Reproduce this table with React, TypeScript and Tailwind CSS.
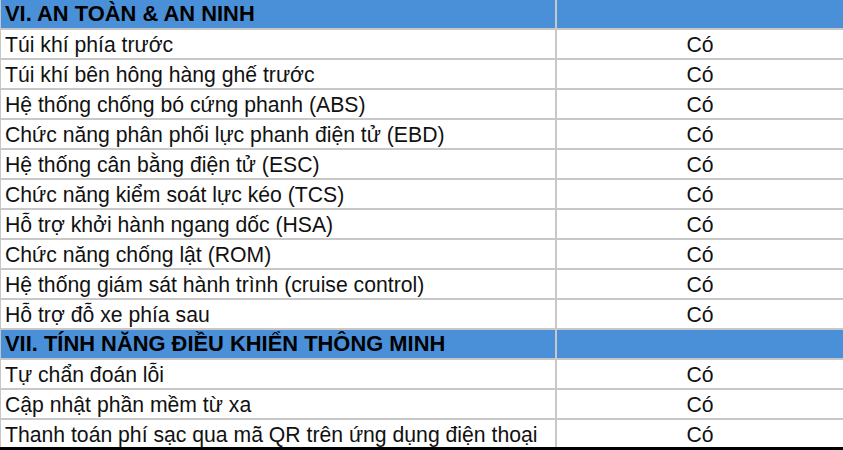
const SECTIONS = [
  {
    title: "VI. AN TOÀN & AN NINH",
    items: [
      "Túi khí phía trước",
      "Túi khí bên hông hàng ghế trước",
      "Hệ thống chống bó cứng phanh (ABS)",
      "Chức năng phân phối lực phanh điện tử (EBD)",
      "Hệ thống cân bằng điện tử (ESC)",
      "Chức năng kiểm soát lực kéo (TCS)",
      "Hỗ trợ khởi hành ngang dốc (HSA)",
      "Chức năng chống lật (ROM)",
      "Hệ thống giám sát hành trình (cruise control)",
      "Hỗ trợ đỗ xe phía sau",
    ],
  },
  {
    title: "VII. TÍNH NĂNG ĐIỀU KHIỂN THÔNG MINH",
    items: [
      "Tự chẩn đoán lỗi",
      "Cập nhật phần mềm từ xa",
      "Thanh toán phí sạc qua mã QR trên ứng dụng điện thoại",
    ],
  },
];

export default function App() {
  return (
    <div
      className="w-[843px] h-[450px] overflow-hidden bg-white text-[21.2px] leading-none text-[#111]"
      style={{ fontFamily: '"Liberation Sans", Arial, sans-serif' }}
    >
      <div className="border-l border-[#c6c6c6] h-[447px] overflow-hidden">
        {SECTIONS.map((section) => (
          <div key={section.title}>
            <div className="flex h-[30px] border-b-2 border-[#c8c8c8] bg-[#4a90d9]">
              <div className="w-[554px] flex items-center pl-[4px] font-bold text-[21.9px] text-black whitespace-nowrap">
                {section.title}
              </div>
              <div className="w-[2px] bg-[#c8c8c8]" />
              <div className="flex-1" />
            </div>
            {section.items.map((item) => (
              <div key={item} className="flex h-[30px] border-b-2 border-[#c8c8c8]">
                <div className="w-[554px] flex items-center pl-[4px] pt-[1px] whitespace-nowrap">{item}</div>
                <div className="w-[2px] bg-[#c8c8c8]" />
                <div className="flex-1 flex items-center justify-center pt-[1px]">Có</div>
              </div>
            ))}
          </div>
        ))}
      </div>
      <div className="h-[3px] bg-black" />
    </div>
  );
}
